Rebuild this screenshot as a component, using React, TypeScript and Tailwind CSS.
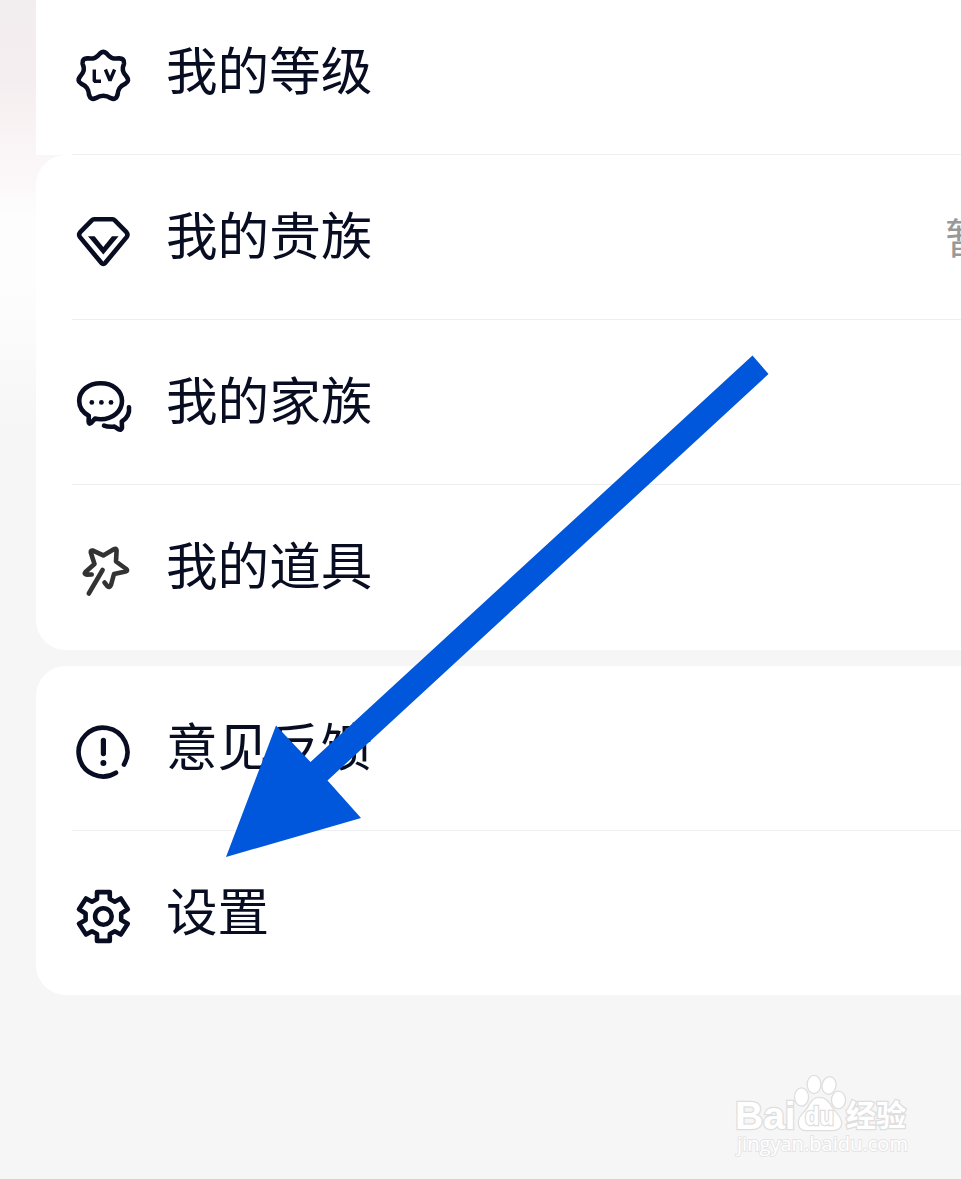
import type { ReactNode } from "react";

const INK = "#080d22";

function Icon({ children, color = INK }: { children: ReactNode; color?: string }) {
  return (
    <svg
      className="mt-[7px] h-[60px] w-[60px] shrink-0"
      viewBox="0 0 60 60"
      fill="none"
      stroke={color}
      strokeWidth="4.6"
      strokeLinecap="round"
      strokeLinejoin="round"
    >
      {children}
    </svg>
  );
}

function LevelIcon() {
  return (
    <Icon>
      <path d="M27.3 7.2Q30.3 4.4 33.3 7.2C37 12 40 13 45.6 12.4Q51.6 12 51 17.6C48.8 23 49.4 26 53.5 30.5Q57 35 52.5 37.6C46.8 40 45 43 44.5 49Q42.8 54.4 38 52.2C33 49 27.6 49 22.6 52.2Q17.8 54.4 16.1 49C15.6 43 13.8 40 8.1 37.6Q3.6 35 7.1 30.5C11.2 26 11.8 23 9.6 17.6Q9 12 15 12.4C20.6 13 23.6 12 27.3 7.2Z" />
      <path d="M21.3 23.5V35.2H28M32.4 23.5L37 34.5L41.6 23.5" strokeWidth="3.4" strokeLinecap="butt" strokeLinejoin="bevel" />
    </Icon>
  );
}

function NobleIcon() {
  return (
    <Icon>
      <path d="M21 8.3H39.6Q40.8 8.3 41.8 9.3L53.4 21.2Q55.4 23.7 53.6 26.1L32.3 51.8Q30.3 53.9 28.3 51.8L7 26.1Q5.2 23.7 7.2 21.2L18.8 9.3Q19.8 8.3 21 8.3Z" />
      <path d="M15 25.3H21.6L30.3 36L39 25.3H45.6L30.3 43.5Z" fill={INK} stroke="none" />
    </Icon>
  );
}

function FamilyIcon() {
  return (
    <Icon>
      <path d="M15.8 39.8C9.5 36.3 6.2 31 6.2 25C6.2 14.5 15.8 7.2 27.7 7.2C39.6 7.2 49 14.5 49 25C49 35.2 39.6 43.2 27.7 43.2Q24.6 43.2 22 42.6L18 47Q15.8 48.6 15.6 45.7Z" />
      <path d="M56 31.2C56.8 37 54 42.5 48.8 45.5L49 51.8Q48.6 54.8 45.3 53.2L41.5 50.6C37.4 51.1 34 50.8 31 49.6" />
      <g fill={INK} stroke="none">
        <circle cx="18.8" cy="26.4" r="2.4" />
        <circle cx="28.4" cy="26.4" r="2.4" />
        <circle cx="38" cy="26.4" r="2.4" />
      </g>
    </Icon>
  );
}

function PropsIcon() {
  return (
    <Icon color="#333333">
      <path d="M18.7 33.5L13.5 33.6Q10.8 33 12.5 31L21.5 23L17.8 11.5Q17.5 9 20 9.6L30.3 14.4L40.8 8.2Q43.5 6.8 43.6 9.5L43 20.5L53.3 28Q55.2 29.8 52.6 30.5L41 33L38 44Q36.8 47 34.5 45.2L31.5 41.5" />
      <path d="M29.6 29L15.8 52.5" />
    </Icon>
  );
}

function FeedbackIcon() {
  return (
    <Icon>
      <path d="M51 42.5A24.4 24.4 0 1 0 43 50.7" />
      <path d="M30.4 18.3V31.6" strokeWidth="5.2" />
      <circle cx="30.4" cy="41" r="3" fill={INK} stroke="none" />
    </Icon>
  );
}

function SettingsIcon() {
  return (
    <Icon>
      <path d="M24 5.1H36.8V12L41.8 14.7L47.8 11.5L54.8 22.3L48.2 26.5V33L54.8 36.7L47.8 47.5L41.8 44.3L36.8 47V53.9H24V47L19 44.3L13 47.5L6 36.7L12.6 33V26.5L6 22.3L13 11.5L19 14.7L24 12Z" />
      <circle cx="30.4" cy="29.5" r="8.3" />
    </Icon>
  );
}

function MenuRow({ icon, label, extra }: { icon: ReactNode; label: string; extra?: string }) {
  return (
    <div className="flex h-[164px] items-center overflow-hidden pl-[37px]">
      {icon}
      <span className="ml-[33px] pb-2 whitespace-nowrap text-[51.6px] leading-[60px] text-[#080d22]">{label}</span>
      {extra && <span className="-mr-[68px] ml-auto pb-[3px] text-[42px] leading-[60px] text-[#999999]">{extra}</span>}
    </div>
  );
}

function Divider() {
  return <div className="ml-9 h-px bg-[#eeeeee]" />;
}

function Arrow() {
  return (
    <svg className="pointer-events-none absolute top-0 left-0" width="961" height="1179">
      <polygon points="752.5,355.5 768.5,374 327.5,780.5 361,818 226,857 276,725.5 310.5,762" fill="#0057db" />
    </svg>
  );
}

function Watermark() {
  return (
    <svg
      className="absolute top-[1066px] left-[728px]"
      width="200"
      height="100"
      fill="#ffffff"
      stroke="#dedede"
      strokeWidth="2.6"
      paintOrder="stroke"
      fontFamily="'Open Sans', 'Noto Sans CJK SC', sans-serif"
    >
      <text x="7" y="62.5" fontSize="39" fontWeight="700" fontFamily="'Liberation Sans', Arial, sans-serif">Bai</text>
      <ellipse cx="73.5" cy="31" rx="6.4" ry="8.4" />
      <ellipse cx="86" cy="18.5" rx="6.2" ry="8.4" />
      <ellipse cx="101" cy="19.5" rx="6.4" ry="8.2" transform="rotate(12 101 19.5)" />
      <ellipse cx="110.5" cy="34" rx="6.4" ry="8.2" />
      <path d="M91 32C98 32 101 37 104 42C108 48 113 51 113 57C113 62 109 64 104 64H78C73 64 71 61 71 56C71 50 77 47 80 42C83 37 85 32 91 32Z" />
      <text x="77" y="59" fontSize="25" fontWeight="700" fontFamily="'Liberation Sans', Arial, sans-serif" textLength="29" lengthAdjust="spacingAndGlyphs">du</text>
      <text x="118" y="60" fontSize="30" fontWeight="700" textLength="60">经验</text>
      <text x="9" y="85" fontSize="20" stroke="#e4e4e4" strokeWidth="1.8" textLength="171" lengthAdjust="spacingAndGlyphs">jingyan.baidu.com</text>
    </svg>
  );
}

export default function App() {
  return (
    <div className="relative h-[1179px] w-[961px] overflow-hidden bg-[linear-gradient(180deg,#f2edef_0px,#f5eef0_80px,#faf5f6_150px,#fcf8f9_185px,#fdfdfd_215px,#fdfdfd_290px,#f6f6f6_430px,#f6f6f6_1179px)] pl-9 font-['Noto_Sans_CJK_SC',sans-serif]">
      <section className="-mt-[10px] bg-white">
        <MenuRow icon={<LevelIcon />} label="我的等级" />
        <Divider />
      </section>
      <section className="rounded-l-[30px] bg-white pb-px">
        <MenuRow icon={<NobleIcon />} label="我的贵族" extra="暂无" />
        <Divider />
        <MenuRow icon={<FamilyIcon />} label="我的家族" />
        <Divider />
        <MenuRow icon={<PropsIcon />} label="我的道具" />
      </section>
      <section className="mt-4 rounded-l-[30px] bg-white">
        <MenuRow icon={<FeedbackIcon />} label="意见反馈" />
        <Divider />
        <MenuRow icon={<SettingsIcon />} label="设置" />
      </section>
      <Arrow />
      <Watermark />
    </div>
  );
}
